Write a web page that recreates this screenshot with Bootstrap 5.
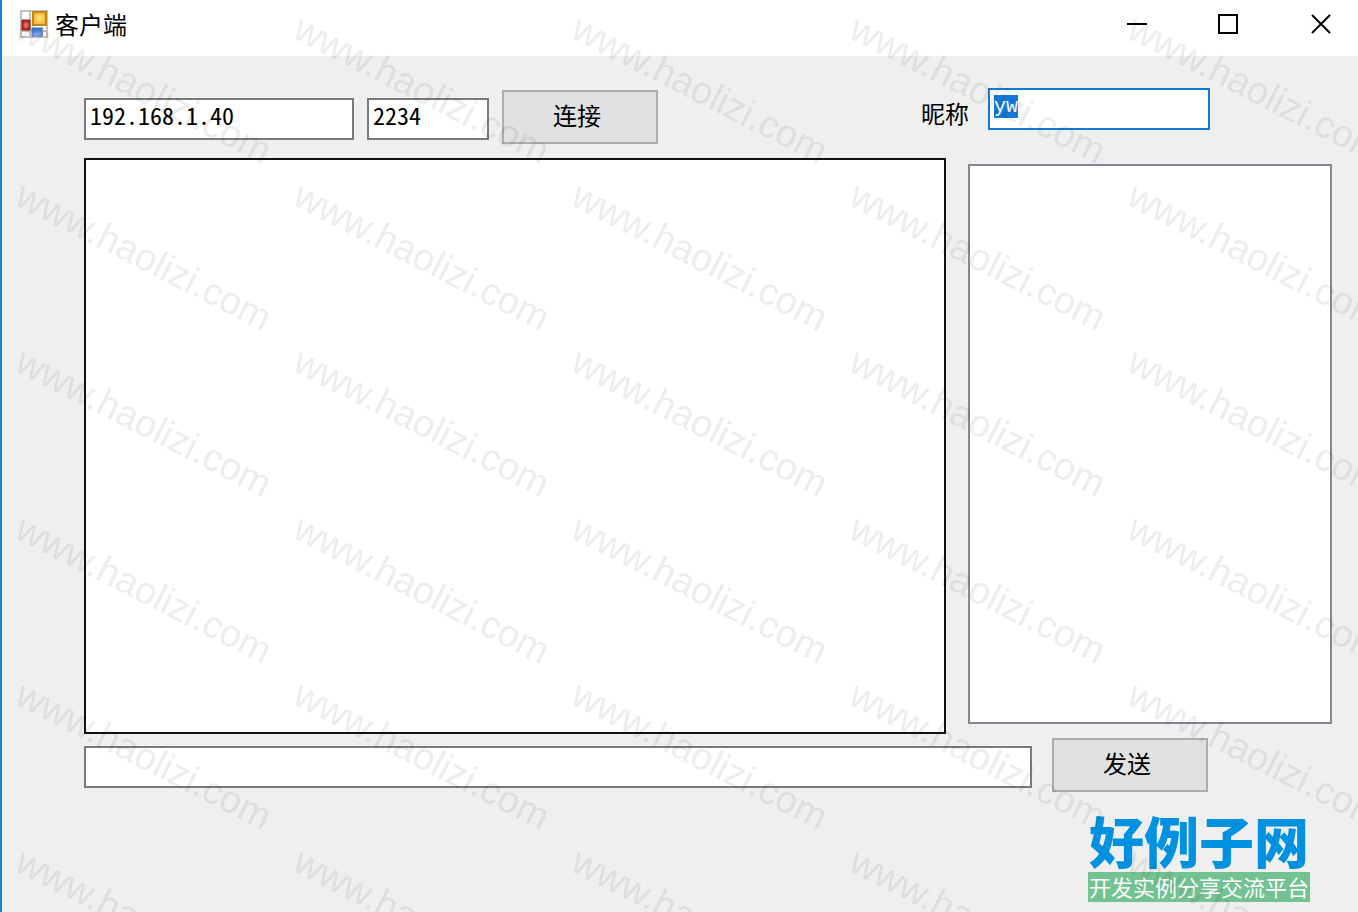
<!DOCTYPE html>
<html lang="zh-CN">
<head>
<meta charset="utf-8">
<meta name="viewport" content="width=device-width, initial-scale=1">
<title>客户端</title>
<link href="https://cdn.jsdelivr.net/npm/bootstrap@5.3.0/dist/css/bootstrap.min.css" rel="stylesheet">
<style>
  body { background: #efefef; color: #000; font-family: "Noto Sans CJK SC", sans-serif; font-size: 24px; line-height: 32px; }
  .client-window { border-left: 2px solid #1c7fd6; }
  .title-bar { height: 56px; padding: 0 26px 8px 18px; }
  .title-name { gap: 7px; }
  .caption-btn { width: 22px; height: 22px; }
  .caption-gap { gap: 70px; }
  .client-body { padding: 32px 26px 0 82px; }
  .top-row { height: 70px; }
  .field { height: 42px; padding: 0 4px 10px; border: 2px solid #7a7a7a; border-radius: 0; background: #fff; color: #000; font-size: 24px; line-height: 24px; font-feature-settings: "hwid"; }
  .field:focus { border-color: #1479d7; box-shadow: none; color: #000; outline: 0; }
  .field::selection { background: #1479d7; color: #fff; }
  .field-host { width: 270px; }
  .field-port { width: 122px; }
  .field-nick { width: 222px; padding: 0 4px 6px; font-family: "Liberation Mono", monospace; font-size: 20px; }
  .top-group { gap: 13px; padding-top: 2px; }
  .nick-group { gap: 19px; margin-right: 122px; }
  .push-btn { width: 156px; height: 54px; padding: 0 6px 4px 0; border: 2px solid #adadad; border-radius: 0; background: #e1e1e1; color: #000; font-size: 24px; line-height: 32px; }
  .pane-row { gap: 22px; }
  .pane { resize: none; border: 2px solid #111; border-radius: 0; background: #fff; min-height: 200px; }
  .pane:focus { box-shadow: none; border-color: #111; }
  .user-pane { width: 364px; margin: 6px 0 10px; padding: 4px; border: 2px solid #828790; background: #fff; }
  .send-row { gap: 20px; margin: 4px 124px 0 0; }
  .site-mark { width: 222px; margin: 22px 22px 10px auto; text-align: center; }
  .site-name { padding-bottom: 8px; color: #0092e0; font-size: 55px; line-height: 50px; font-weight: 900; white-space: nowrap; }
  .site-tag { height: 30px; background: #72c292; color: #fff; font-size: 22px; line-height: 28px; white-space: nowrap; }
  .stamp-layer { pointer-events: none; z-index: 5; }
</style>
</head>
<body>
<div class="client-window position-relative overflow-hidden min-vh-100 d-flex flex-column">
  <header class="title-bar bg-white d-flex align-items-center justify-content-between">
    <div class="title-name d-flex align-items-center">
      <svg width="28" height="28" viewBox="0 0 28 28" aria-hidden="true">
        <defs>
          <radialGradient id="gold"><stop offset="0" stop-color="#ffe488"/><stop offset="1" stop-color="#f3b52e"/></radialGradient>
          <radialGradient id="ruby"><stop offset="0" stop-color="#ee8a78"/><stop offset="1" stop-color="#ad1c16"/></radialGradient>
          <linearGradient id="sky" x2="0" y2="1"><stop offset="0" stop-color="#2f68c8"/><stop offset="1" stop-color="#8bb5f3"/></linearGradient>
        </defs>
        <path fill="#fff" stroke="#c2c2c2" stroke-width="2" d="M1 1h26v26H1zM1 21h26M10 1v26M22 17v10"/>
        <path fill="url(#gold)" stroke="#bd8a1c" stroke-width="2" d="M13 2h13v13H13z"/>
        <path fill="url(#ruby)" stroke="#9f2019" stroke-width="1" d="M2 10h8v10H2z"/>
        <path fill="url(#sky)" stroke="#4777c5" stroke-width="1" d="M12 18h10v8H12z"/>
      </svg>
      <span>客户端</span>
    </div>
    <div class="d-flex caption-gap">
      <button class="caption-btn btn border-0 p-0 d-flex" type="button" aria-label="最小化"><svg width="22" height="22"><path stroke="#000" stroke-width="2" d="M1 11h20"/></svg></button>
      <button class="caption-btn btn border-0 p-0 d-flex" type="button" aria-label="最大化"><svg width="22" height="22"><path fill="none" stroke="#000" stroke-width="2" d="M1 2h18v18H1z"/></svg></button>
      <button class="caption-btn btn border-0 p-0 d-flex" type="button" aria-label="关闭"><svg width="22" height="22"><path stroke="#000" stroke-width="2" d="M2 2l18 18M20 2L2 20"/></svg></button>
    </div>
  </header>

  <main class="client-body flex-grow-1 d-flex flex-column">
    <div class="top-row d-flex align-items-start justify-content-between">
      <div class="top-group d-flex align-items-center">
        <input class="field field-host mt-1" type="text" value="192.168.1.40" aria-label="服务器地址">
        <input class="field field-port mt-1" type="text" value="2234" aria-label="端口">
        <button class="push-btn btn" type="button">连接</button>
      </div>
      <div class="nick-group d-flex align-items-center">
        <label class="pt-2" for="nick">昵称</label>
        <input class="field field-nick" id="nick" type="text" value="yw">
      </div>
    </div>

    <div class="pane-row d-flex flex-grow-1">
      <textarea class="pane flex-grow-1" readonly aria-label="聊天记录"></textarea>
      <ul class="user-pane list-unstyled" aria-label="在线用户"></ul>
    </div>

    <div class="send-row d-flex align-items-center">
      <input class="field flex-grow-1 mt-1" type="text" aria-label="消息">
      <button class="push-btn btn" type="button">发送</button>
    </div>

    <div class="site-mark">
      <div class="site-name">好例子网</div>
      <div class="site-tag">开发实例分享交流平台</div>
    </div>
  </main>

  <svg class="stamp-layer position-absolute top-0 start-0 w-100 h-100" aria-hidden="true">
    <defs>
      <pattern id="stamp" x="8" y="10" width="278" height="333" patternUnits="userSpaceOnUse">
        <g font-family="Liberation Sans, Arial, sans-serif" font-size="38" fill="#000" fill-opacity=".07">
          <text transform="translate(3 27) rotate(27)">www.haolizi.com</text>
          <text transform="translate(3 194) rotate(27)">www.haolizi.com</text>
        </g>
      </pattern>
    </defs>
    <rect width="100%" height="100%" fill="url(#stamp)"/>
  </svg>
</div>
<script src="https://cdn.jsdelivr.net/npm/bootstrap@5.3.0/dist/js/bootstrap.bundle.min.js"></script>
<script>
  const nick = document.getElementById('nick');
  nick.focus();
  nick.select();
</script>
</body>
</html>
